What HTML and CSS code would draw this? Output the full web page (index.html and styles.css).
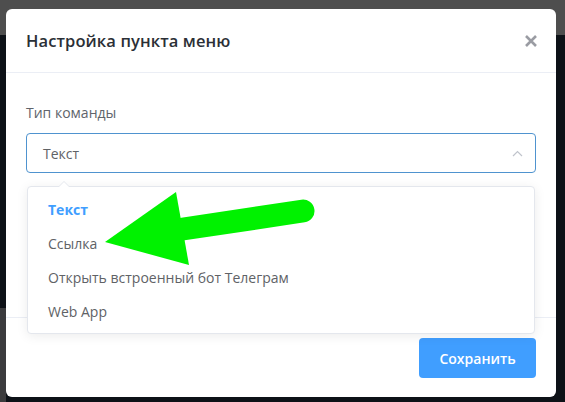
FILE: index.html
```html
<!DOCTYPE html>
<html lang="ru">
<head>
<meta charset="utf-8">
<link rel="stylesheet" href="styles.css">
</head>
<body>
<div class="backdrop">
  <div class="modal">
    <div class="modal-header">
      <span class="modal-title">Настройка пункта меню</span>
      <svg class="close" width="14" height="14" viewBox="0 0 14 14"><path d="M2 2L12 12M12 2L2 12" stroke="#9a9ca3" stroke-width="2.6" stroke-linecap="butt"/></svg>
    </div>
    <div class="modal-body">
      <div class="label">Тип команды</div>
      <div class="select">
        <span class="select-value">Текст</span>
        <svg class="chevron" width="11" height="7" viewBox="0 0 11 7"><path d="M1 6L5.5 1.5L10 6" fill="none" stroke="#c0c4cc" stroke-width="1.2"/></svg>
      </div>
    </div>
    <div class="modal-footer">
      <button class="btn-primary">Сохранить</button>
    </div>
    <div class="dropdown">
      <div class="pointer"></div>
      <div class="option selected">Текст</div>
      <div class="option">Ссылка</div>
      <div class="option">Открыть встроенный бот Телеграм</div>
      <div class="option">Web App</div>
    </div>
  </div>
  <svg class="green-arrow" width="565" height="402" viewBox="0 0 565 402">
    <line x1="183" y1="229" x2="303" y2="211" stroke="#00f200" stroke-width="23" stroke-linecap="round"/>
    <polygon points="105,242 176,192 189,265" fill="#00f200"/>
  </svg>
</div>
</body>
</html>
```
FILE: styles.css
```css
* { box-sizing: border-box; }
html, body { margin: 0; padding: 0; }
body {
  width: 565px;
  height: 402px;
  overflow: hidden;
  font-family: "Open Sans", "Noto Sans", sans-serif;
}
.backdrop {
  position: relative;
  width: 565px;
  height: 402px;
  padding: 9px 9px 0 6px;
  background:
    linear-gradient(#4e4e4e 0 35px, transparent 35px),
    linear-gradient(to right, #3b3b3d 0 6px, transparent 6px) 0 308px / 100% 94px no-repeat,
    #0d1117;
}
.modal {
  position: relative;
  width: 550px;
  height: 388px;
  background: #fff;
  border-radius: 6px;
  display: flex;
  flex-direction: column;
}
.modal-header {
  height: 64px;
  padding: 0 18px 0 20px;
  display: flex;
  align-items: center;
  justify-content: space-between;
  border-bottom: 1px solid #ebeef5;
}
.modal-title {
  font-size: 16.5px;
  font-weight: 600;
  color: #2b2f36;
  letter-spacing: 0.1px;
}
.close { display: block; }
.modal-body {
  height: 245px;
  padding: 30px 20px 0 20px;
  border-bottom: 1px solid #ebeef5;
}
.label {
  height: 20px;
  line-height: 20px;
  font-size: 14px;
  color: #60646b;
  margin-bottom: 10px;
}
.select {
  height: 40px;
  border: 1px solid #4f93cf;
  border-radius: 4px;
  display: flex;
  align-items: center;
  justify-content: space-between;
  padding: 0 12px 0 16px;
}
.select-value {
  font-size: 14px;
  color: #606266;
}
.chevron { display: block; }
.modal-footer {
  flex: 1;
  display: flex;
  justify-content: flex-end;
  align-items: flex-start;
  padding: 20px 20px 0 20px;
}
.btn-primary {
  width: 117px;
  height: 40px;
  border: none;
  border-radius: 4px;
  background: #409eff;
  color: #fff;
  font-family: "Open Sans", "Noto Sans", sans-serif;
  font-size: 14px;
  font-weight: 600;
}
.dropdown {
  position: absolute;
  left: 21px;
  top: 177px;
  width: 508px;
  height: 148px;
  background: #fff;
  border: 1px solid #e4e7ed;
  border-radius: 4px;
  box-shadow: 0 2px 12px rgba(0, 0, 0, 0.08);
  padding: 6px 0 5px 0;
}
.pointer {
  position: absolute;
  left: 30px;
  top: -6px;
  width: 0;
  height: 0;
  border-left: 6px solid transparent;
  border-right: 6px solid transparent;
  border-bottom: 6px solid #e4e7ed;
}
.pointer::after {
  content: "";
  position: absolute;
  left: -5px;
  top: 1px;
  border-left: 5px solid transparent;
  border-right: 5px solid transparent;
  border-bottom: 5px solid #fff;
}
.option {
  height: 34px;
  line-height: 34px;
  padding: 0 20px;
  font-size: 14px;
  color: #606266;
}
.option.selected {
  color: #409eff;
  font-weight: 700;
}
.green-arrow {
  position: absolute;
  left: 0;
  top: 0;
  pointer-events: none;
}
```
